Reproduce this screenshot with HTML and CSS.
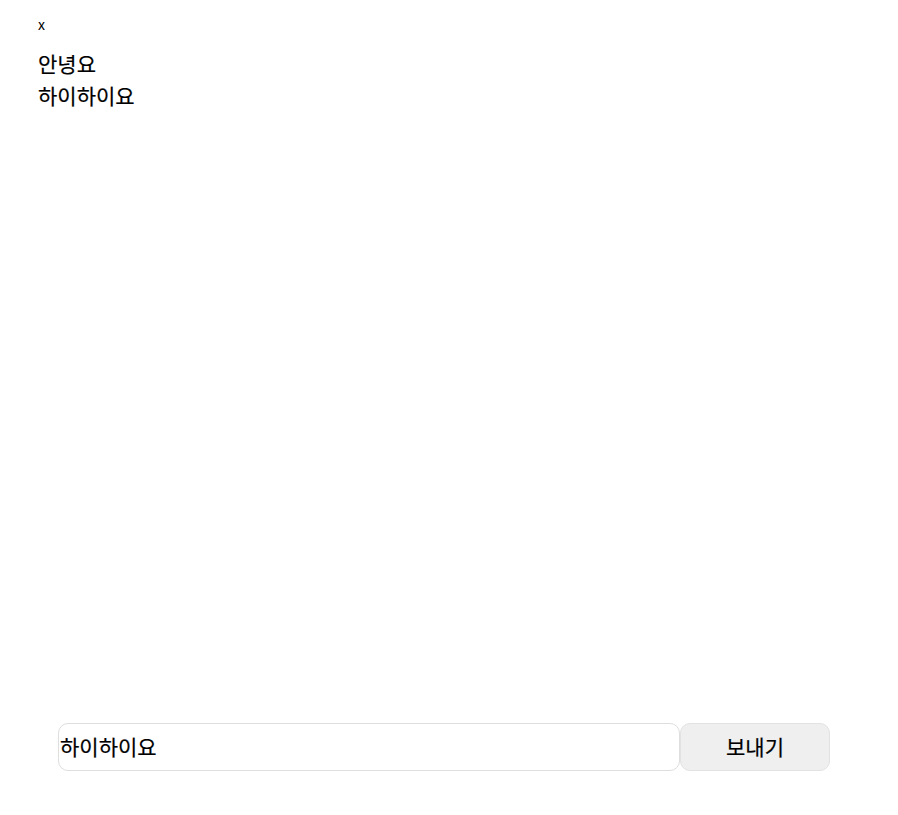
FILE: index.html
```html
<!DOCTYPE html>
<html lang="ko">
<head>
<meta charset="utf-8">
<link rel="stylesheet" href="styles.css">
</head>
<body>
<div class="page">
  <div class="close">x</div>
  <div class="messages">
    <div class="msg">안녕요</div>
    <div class="msg">하이하이요</div>
  </div>
  <form class="composer">
    <input class="field" type="text" value="하이하이요">
    <button class="send" type="button">보내기</button>
  </form>
</div>
</body>
</html>
```

FILE: styles.css
```css
html, body {
  margin: 0;
  padding: 0;
  background: #fff;
}
body {
  font-family: "Noto Sans CJK KR", "Noto Sans", sans-serif;
  color: #000;
}
.page {
  height: 815px;
  box-sizing: border-box;
  padding: 14px 0 44px 38px;
  display: flex;
  flex-direction: column;
}
.close {
  font-size: 14px;
  line-height: 20px;
}
.messages {
  flex: 1;
  margin-top: 13px;
}
.msg {
  font-size: 21px;
  line-height: 32px;
  font-weight: 400;
  -webkit-text-stroke: 0.2px #000;
}
.composer {
  display: flex;
  margin: 0 0 0 20px;
  width: 772px;
  height: 48px;
}
.field {
  flex: 1;
  box-sizing: border-box;
  height: 48px;
  border: 1px solid #dedede;
  border-radius: 10px;
  padding: 0 1px 3px;
  font-family: inherit;
  font-size: 21px;
  font-weight: 400;
  -webkit-text-stroke: 0.2px #000;
  color: #000;
  outline: none;
}
.send {
  width: 150px;
  box-sizing: border-box;
  height: 48px;
  border: 1px solid #e2e2e2;
  border-radius: 10px;
  background: #efefef;
  padding: 0 0 3px;
  font-family: inherit;
  font-size: 21px;
  font-weight: 400;
  -webkit-text-stroke: 0.2px #000;
  color: #000;
}
```
